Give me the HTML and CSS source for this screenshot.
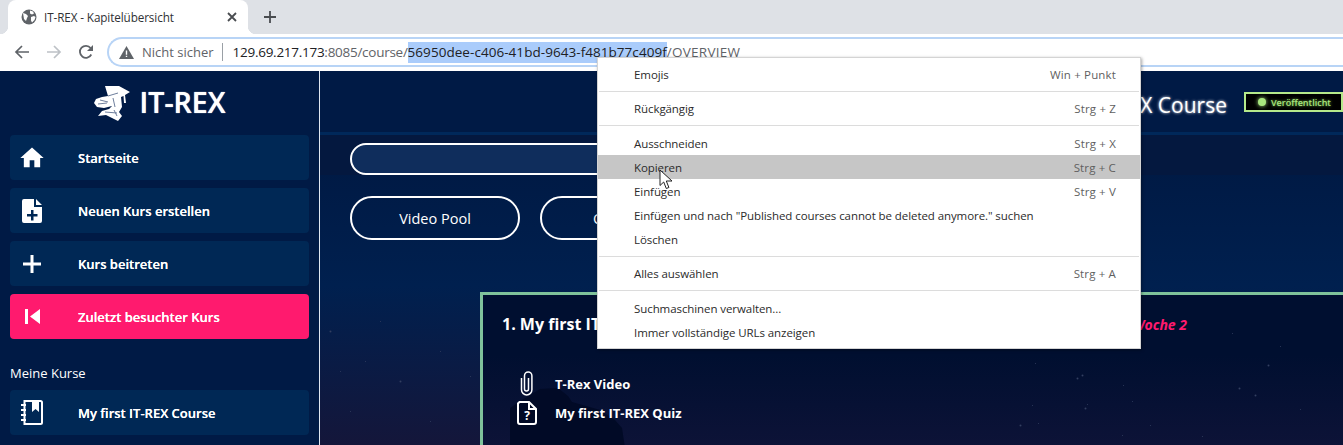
FILE: index.html
```html
<!DOCTYPE html>
<html lang="de">
<head>
    <meta charset="UTF-8">
    <title>IT-REX - Kapitelübersicht</title>
    <link rel="stylesheet" href="styles.css">
</head>
<body>
    <div class="tabstrip">
        <div class="tab">
            <svg class="tab-globe" width="16" height="16" viewBox="0 0 16 16"><circle cx="8" cy="8" r="7.5" fill="#5f6368"/><path d="M2 4l3 1 2 2 -1 2 -1 3 -2-2zM9 1.500l3 1 1 2-2 1-2-1zM10 8l3-1 1.500 1-1 3-2.500 2.500-1-2z" fill="#fff"/></svg>
            <span class="tab-title">IT-REX - Kapitelübersicht</span>
            <svg class="tab-close" width="10" height="10" viewBox="0 0 10 10"><path d="M1 1l8 8M9 1l-8 8" stroke="#494c50" stroke-width="1.800"/></svg>
        </div>
        <svg class="new-tab" width="12" height="12" viewBox="0 0 12 12"><path d="M6 0v12M0 6h12" stroke="#494c50" stroke-width="1.800"/></svg>
    </div>

    <div class="toolbar">
        <div class="nav-buttons">
            <svg width="16" height="16" viewBox="0 0 16 16"><path d="M15 8H2M8 2L2 8l6 6" fill="none" stroke="#5f6368" stroke-width="1.700"/></svg>
            <svg width="16" height="16" viewBox="0 0 16 16"><path d="M1 8h13M8 2l6 6-6 6" fill="none" stroke="#bdc1c6" stroke-width="1.700"/></svg>
            <svg width="16" height="16" viewBox="0 0 16 16"><path d="M13.300 10.500A6 6 0 1 1 12.600 4" fill="none" stroke="#5f6368" stroke-width="1.800"/><path d="M15 1v6H9z" fill="#5f6368"/></svg>
        </div>
        <div class="omnibox">
            <svg class="warn" width="15" height="13" viewBox="0 0 15 13"><path d="M7.500 0L15 13H0z" fill="#5f6368"/><path d="M6.800 4.500h1.400v4.200H6.800zM6.800 9.700h1.400v1.400H6.800z" fill="#fff"/></svg>
            <span class="not-secure">Nicht sicher</span>
            <span class="omni-sep"></span>
            <span class="url"><span class="url-host">129.69.217.173</span>:8085/course/<span class="url-sel">56950dee-c406-41bd-9643-f481b77c409f</span><span class="url-tail">/OVERVIEW</span></span>
        </div>
    </div>

    <div class="app">
        <aside class="sidebar">
            <div class="logo">
                <svg width="40" height="40" viewBox="0 0 40 40"><path d="M13 3L27 3L38 9L33 12L34 20L32 20L31.500 13L29 14L30 24L27 29L30 33L26 38L20 35L14 32L6 33L10 28L17 26L20 23L12 25L5 24L2 20L4 16L10 14L16 13Z" fill="#fff"/><path d="M8 17l8 2M6 21l9-1M21 15l2 9M13 29l12 1M22 27l3 6M16 13l10-3" stroke="#6f7f9d" stroke-width="1" fill="none"/></svg>
                <span class="logo-text">IT-REX</span>
            </div>
            <nav class="side-nav">
                <a class="side-item">
                    <span class="side-icon"><svg width="28" height="28" viewBox="0 0 24 24"><path d="M10 20v-6h4v6h5v-8h3L12 3 2 12h3v8z" fill="#fff"/></svg></span>
                    Startseite
                </a>
                <a class="side-item">
                    <span class="side-icon"><svg width="20" height="24" viewBox="0 0 20 24"><path fill-rule="evenodd" d="M2 0h10v8h8v14a2 2 0 0 1-2 2H2a2 2 0 0 1-2-2V2a2 2 0 0 1 2-2zM9 11v4H5v2.500h4v4h2.500v-4h4V15h-4v-4zM14 0l6 6h-6z" fill="#fff"/></svg></span>
                    Neuen Kurs erstellen
                </a>
                <a class="side-item">
                    <span class="side-icon"><svg width="18" height="18" viewBox="0 0 18 18"><path d="M9 0v18M0 9h18" stroke="#fff" stroke-width="3"/></svg></span>
                    Kurs beitreten
                </a>
                <a class="side-item side-item-active">
                    <span class="side-icon"><svg width="15" height="15" viewBox="0 0 15 15"><path d="M0 0h3v15H0zM15 0v15L5 7.500z" fill="#fff"/></svg></span>
                    Zuletzt besuchter Kurs
                </a>
            </nav>
            <div class="side-label">Meine Kurse</div>
            <a class="side-item">
                <span class="side-icon"><svg width="22" height="25" viewBox="0 0 22 25"><path d="M3.500 1h16a1.500 1.500 0 0 1 1.500 1.500v20a1.500 1.500 0 0 1-1.500 1.500h-16z" fill="none" stroke="#fff" stroke-width="2"/><path d="M11 1h7v11l-3.500-3L11 12z" fill="#fff"/><path d="M0 5h5M0 10h5M0 15h5M0 20h5" stroke="#fff" stroke-width="2.200"/></svg></span>
                My first IT-REX Course
            </a>
        </aside>

        <main class="content">
            <header class="course-head">
                <h1 class="course-title">My first IT-REX Course</h1>
                <div class="badge"><span class="badge-dot"></span>Veröffentlicht</div>
            </header>
            <div class="search-row"><div class="search-box"></div></div>
            <div class="btn-row">
                <a class="pill-btn">Video Pool</a>
                <a class="pill-btn">Quiz Pool</a>
            </div>
            <section class="chapter">
                <svg class="chapter-shadow" width="115" height="60" viewBox="0 0 115 60"><path d="M0 60V20L12 12 30 1 48 0 58 8 62 14 90 22 105 32 112 40 115 60z" fill="#010a26"/></svg>
                <div class="chapter-head">
                    <h2 class="chapter-title">1. My first IT-REX Chapter</h2>
                    <span class="chapter-week">Woche 2</span>
                </div>
                <div class="chapter-item">
                    <svg width="20" height="25" viewBox="-3 0 20 25"><path d="M8.500 7v11a2 2 0 0 1-4 0V4.700a3.700 3.700 0 0 1 7.400 0v14a5.200 5.200 0 0 1-10.400 0V7" fill="none" stroke="#fff" stroke-width="1.500"/></svg>
                    <span>T-Rex Video</span>
                </div>
                <div class="chapter-item">
                    <svg width="20" height="24" viewBox="0 0 20 24"><path d="M2.500 1H12l7 7v13a2 2 0 0 1-2 2H3a2 2 0 0 1-2-2V2.500z" fill="none" stroke="#fff" stroke-width="2"/><path d="M12 1v7h7" fill="none" stroke="#fff" stroke-width="2"/><text x="10" y="19" text-anchor="middle" class="quiz-mark">?</text></svg>
                    <span>My first IT-REX Quiz</span>
                </div>
            </section>
            <div class="stars"></div>
        </main>
    </div>

    <!-- context menu of the address bar -->
    <div class="menu">
        <div class="menu-item"><span>Emojis</span><span class="key">Win + Punkt</span></div>
        <div class="menu-sep"></div>
        <div class="menu-item"><span>Rückgängig</span><span class="key">Strg + Z</span></div>
        <div class="menu-sep"></div>
        <div class="menu-item"><span>Ausschneiden</span><span class="key">Strg + X</span></div>
        <div class="menu-item menu-item-hover"><span>Kopieren</span><span class="key">Strg + C</span></div>
        <div class="menu-item"><span>Einfügen</span><span class="key">Strg + V</span></div>
        <div class="menu-item"><span>Einfügen und nach "Published courses cannot be deleted anymore." suchen</span></div>
        <div class="menu-item"><span>Löschen</span></div>
        <div class="menu-sep"></div>
        <div class="menu-item"><span>Alles auswählen</span><span class="key">Strg + A</span></div>
        <div class="menu-sep"></div>
        <div class="menu-item"><span>Suchmaschinen verwalten...</span></div>
        <div class="menu-item"><span>Immer vollständige URLs anzeigen</span></div>
    </div>
    <svg class="cursor" width="14" height="21" viewBox="0 0 14 21"><path d="M1 1v15.500l3.700-3.500 2.600 6.500 2.600-1-2.600-6.500H13z" fill="#fff" stroke="#222" stroke-width="1"/></svg>
</body>
</html>
```

FILE: styles.css
```css
*{
    box-sizing: border-box;
    padding: 0;
    margin: 0;
}
body{
    width: 1343px;
    height: 445px;
    overflow: hidden;
    position: relative;
    font-family: "Open Sans", "Noto Sans", sans-serif;
    background: #fff;
}

/* browser chrome */
.tabstrip{
    height: 34px;
    background: #dee1e6;
    display: flex;
    align-items: flex-end;
    padding-left: 8px;
}
.tab{
    width: 240px;
    height: 34px;
    background: #fff;
    border-radius: 8px 8px 0 0;
    display: flex;
    align-items: center;
    padding-left: 13px;
    position: relative;
}
.tab::before,.tab::after{
    content: "";
    position: absolute;
    bottom: 0;
    width: 8px;
    height: 8px;
}
.tab::before{
    left: -8px;
    background: radial-gradient(circle at 0 0, #dee1e6 8px, #fff 8.500px);
}
.tab::after{
    right: -8px;
    background: radial-gradient(circle at 100% 0, #dee1e6 8px, #fff 8.500px);
}
.tab-globe{
    margin-right: 7px;
}
.tab-title{
    font-size: 11.700px;
    color: #2f3134;
    flex: 1;
    letter-spacing: -0.1px;
}
.tab-close{
    margin-right: 11px;
}
.new-tab{
    margin: 0 0 11px 16px;
}
.toolbar{
    height: 37px;
    background: #fff;
    display: flex;
    align-items: flex-start;
}
.nav-buttons{
    width: 107px;
    height: 36px;
    display: flex;
    align-items: center;
    gap: 16px;
    padding-left: 14px;
}
.omnibox{
    flex: 1;
    height: 30px;
    margin-top: 3px;
    border: 2px solid #b8d4f6;
    border-right: none;
    border-radius: 15px 0 0 15px;
    display: flex;
    align-items: center;
    padding-left: 10px;
    font-size: 13.500px;
    color: #5f6368;
    white-space: nowrap;
}
.warn{
    margin-right: 8px;
}
.not-secure{
    font-size: 13px;
}
.omni-sep{
    width: 1px;
    height: 18px;
    background: #9aa0a6;
    margin: 0 10px 0 8px;
}
.url{
    letter-spacing: -0.27px;
}
.url-host{
    color: #202124;
}
.url-sel{
    background: #aaccfb;
    color: #202124;
    line-height: 21px;
    display: inline-block;
    letter-spacing: 0.05px;
}
.url-tail{
    letter-spacing: 0.25px;
}

/* app */
.app{
    height: 374px;
    display: flex;
    background: #001a45;
    color: #fff;
}
.sidebar{
    width: 320px;
    padding: 0 10px;
    border-right: 1px solid #dfe6f0;
    flex-shrink: 0;
}
.logo{
    height: 64px;
    display: flex;
    align-items: center;
    justify-content: center;
    gap: 8px;
    padding-right: 2px;
}
.logo-text{
    font-size: 28.500px;
    font-weight: 600;
    margin-top: -2px;
    text-shadow: 0 0 1px #fff;
}
.side-nav{
    display: flex;
    flex-direction: column;
    gap: 8px;
}
.side-item{
    height: 45px;
    background: #002855;
    border-radius: 4px;
    display: flex;
    align-items: center;
    font-size: 13px;
    font-weight: 600;
    text-shadow: 0 0 .5px #fff;
}
.side-item-active{
    background: #ff1a6e;
}
.side-icon{
    width: 68px;
    padding-right: 24px;
    display: flex;
    justify-content: center;
    flex-shrink: 0;
}
.side-label{
    font-size: 13px;
    margin: 25px 0 8px;
    line-height: 18px;
}
.content{
    flex: 1;
    min-width: 0;
    position: relative;
    overflow: hidden;
    background: linear-gradient(#001a45 0, #001a45 100px, #00204f 215px, #14163a 374px);
}
.stars{
    position: absolute;
    left: 0;
    top: 240px;
    width: 1px;
    height: 1px;
    border-radius: 50%;
    color: #333f60;
    box-shadow: 10px 20px 0 .5px, 45px 50px, 60px 10px, 80px 70px 0 .5px, 120px 40px, 150px 65px, 30px 100px, 110px 110px, 20px 60px,
        715px 52px, 757px 67px 0 .5px, 762px 64px 0 .5px, 765px 97px 0 .5px, 767px 93px, 712px 94px, 803px 74px, 812px 90px, 935px 84px 0 .5px, 919px 77px 0 .5px, 948px 54px 0 .5px, 980px 98px, 700px 114px 0 .5px, 718px 112px, 830px 114px, 882px 125px, 912px 22px, 960px 35px, 802px 124px;
}
.course-head{
    height: 64px;
    display: flex;
    align-items: center;
    justify-content: flex-end;
    border-bottom: 3px solid #00285a;
}
.course-title{
    font-size: 21px;
    font-weight: 400;
    margin: 7px 17px 0 0;
    white-space: nowrap;
    text-shadow: 0 0 3px #fff;
}
.badge{
    width: 99px;
    height: 20px;
    margin-top: 1px;
    flex-shrink: 0;
    background: #000;
    border: 2px solid #b5e98a;
    display: flex;
    align-items: center;
    padding-left: 12px;
    font-size: 9px;
    font-weight: 600;
    color: #a8e67e;
    text-shadow: 0 0 3px #7fc04e;
}
.badge-dot{
    width: 8px;
    height: 8px;
    border-radius: 50%;
    background: #a8e67e;
    margin-right: 5px;
    box-shadow: 0 0 4px #a8e67e;
}
.search-row{
    padding: 8px 250px 0 30px;
    background: #04183f;
}
.search-box{
    height: 32px;
    border: 2px solid #fff;
    border-radius: 16px;
    background: #0f2d5c;
}
.btn-row{
    display: flex;
    gap: 20px;
    padding: 21px 30px 0;
}
.pill-btn{
    width: 170px;
    height: 44px;
    border: 2px solid #fff;
    border-radius: 22px;
    display: flex;
    align-items: center;
    justify-content: center;
    font-size: 14.500px;
}
.chapter{
    position: relative;
    margin: 52px 0 0 160px;
    height: 200px;
    width: 900px;
    background: linear-gradient(#000f30 0, #000f30 60px, #0e1338 160px);
    border: 3px solid #7fc29b;
    padding: 0 19px;
}
.chapter-shadow{
    position: absolute;
    left: 27px;
    top: 93px;
}
.chapter-head{
    position: relative;
    height: 53px;
    width: 685px;
    margin-bottom: 21px;
    display: flex;
    align-items: center;
    justify-content: space-between;
    padding-top: 5px;
}
.chapter-title{
    font-size: 16px;
    font-weight: 700;
}
.chapter-week{
    font-size: 14px;
    font-weight: 700;
    font-style: italic;
    color: #ff1a6e;
}
.chapter-item{
    position: relative;
    display: flex;
    align-items: center;
    height: 29px;
    padding-left: 15px;
    font-size: 13px;
    font-weight: 700;
}
.chapter-item svg{
    margin-right: 18px;
}
.quiz-mark{
    font-family: "Open Sans", sans-serif;
    font-size: 12px;
    font-weight: 700;
    fill: #fff;
}

/* context menu */
.menu{
    position: absolute;
    left: 597px;
    top: 57px;
    width: 544px;
    height: 292px;
    background: #fff;
    border: 1px solid #d4d4d4;
    padding: 4px 0;
    box-shadow: 1px 1px 3px rgba(0, 0, 0, .35);
    font-size: 11.500px;
    color: #2b2b2b;
    letter-spacing: -0.08px;
}
.menu-item{
    height: 24px;
    display: flex;
    align-items: center;
    justify-content: space-between;
    padding: 0 24px 0 36px;
}
.menu-item-hover{
    background: #c6c6c6;
}
.key{
    color: #5f5f5f;
    letter-spacing: .15px;
}
.menu-sep{
    height: 10.500px;
    display: flex;
    align-items: center;
    padding: 0 1px;
}
.menu-sep::after{
    content: "";
    flex: 1;
    height: 1px;
    background: #dcdcdc;
}
.cursor{
    position: absolute;
    left: 659px;
    top: 169px;
}
```
